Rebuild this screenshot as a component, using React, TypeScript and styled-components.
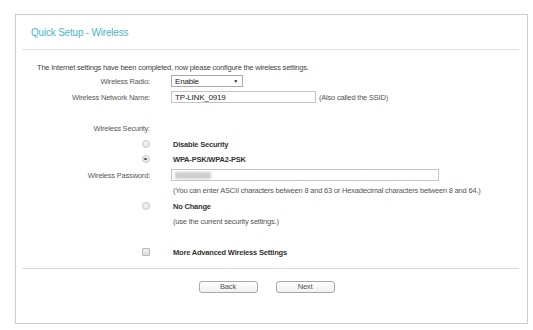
import React from 'react';
import styled, { createGlobalStyle } from 'styled-components';

const Global = createGlobalStyle`
  html, body { margin: 0; padding: 0; background: #ffffff; }
  body {
    font-family: "Liberation Sans", Arial, Helvetica, sans-serif;
    font-size: 7.5px;
    letter-spacing: -0.2px;
    color: #555;
  }
  * { box-sizing: border-box; }
`;

const Page = styled.div`
  padding: 14px 0 0 15px;
`;

const Panel = styled.div`
  width: 513px;
  height: 310px;
  border: 1px solid #cdcdcd;
  box-shadow: 0 0 1px rgba(0, 0, 0, 0.08);
  padding: 0 8px 0 6px;
  display: flex;
  flex-direction: column;
  background: #fff;
`;

const Header = styled.div`
  height: 35px;
  display: flex;
  align-items: center;
  padding-left: 9px;
  border-bottom: 1px solid #e0e0e0;
  color: #4cb6c4;
  font-size: 10px;
  letter-spacing: -0.2px;
`;

const Body = styled.div`
  padding-top: 10px;
  display: flex;
  flex-direction: column;
`;

const Intro = styled.div`
  height: 14px;
  display: flex;
  align-items: center;
  padding-left: 15px;
  color: #444;
`;

const Row = styled.div<{ $mt?: number }>`
  display: grid;
  grid-template-columns: 128px 1fr;
  column-gap: 21px;
  height: 14px;
  align-items: center;
  margin-top: ${(p) => p.$mt ?? 0}px;
`;

const Label = styled.div`
  text-align: right;
  color: #5a5a5a;
  white-space: nowrap;
`;

const MarkCell = styled.div`
  display: flex;
  justify-content: flex-end;
  padding-right: 0.5px;
`;

const Control = styled.div`
  display: flex;
  align-items: center;
  white-space: nowrap;
`;

const Strong = styled.span`
  font-weight: bold;
  color: #333;
  padding-left: 2px;
`;

const Note = styled.span<{ $pl?: number }>`
  color: #555;
  padding-left: ${(p) => p.$pl ?? 2}px;
`;

const Select = styled.div`
  width: 72px;
  height: 12px;
  border: 1px solid #aaa;
  background: #fff;
  display: flex;
  align-items: center;
  justify-content: space-between;
  padding: 0 4px 0 3px;
  color: #222;
  font-size: 8px;
`;

const Arrow = styled.span`
  font-size: 5px;
  color: #222;
`;

const TextBox = styled.div<{ $w: number }>`
  width: ${(p) => p.$w}px;
  height: 12px;
  border: 1px solid #c4c4c4;
  background: #fff;
  display: flex;
  align-items: center;
  padding-left: 3px;
  color: #222;
  font-size: 8px;
`;

const Blur = styled.span`
  display: block;
  width: 36px;
  height: 7px;
  background: #cfcfcf;
  filter: blur(1.2px);
`;

const Radio = styled.span<{ $on?: boolean }>`
  width: 8px;
  height: 8px;
  border-radius: 50%;
  border: 1px solid #c8c8c8;
  background: radial-gradient(circle at 50% 40%, #f6f6f6, #dedede);
  display: flex;
  align-items: center;
  justify-content: center;
  &::after {
    content: '';
    display: ${(p) => (p.$on ? 'block' : 'none')};
    width: 2.5px;
    height: 2.5px;
    border-radius: 50%;
    background: #555;
  }
`;

const Check = styled.span`
  width: 8px;
  height: 8px;
  border-radius: 1px;
  border: 1px solid #b8b8b8;
  background: linear-gradient(#f2f2f2, #dedede);
`;

const Footer = styled.div`
  margin-top: 9px;
  border-top: 1px solid #dcdcdc;
  padding: 12px 8px 0 0;
  display: flex;
  justify-content: center;
  gap: 18px;
`;

const Button = styled.button`
  width: 59px;
  height: 12px;
  border: 1px solid #a8a8a8;
  border-radius: 3px;
  background: linear-gradient(#ffffff, #f1f1f1);
  font-family: inherit;
  font-size: 7.5px;
  letter-spacing: -0.2px;
  color: #555;
  padding: 0;
  line-height: 10px;
`;

export default function App() {
  return (
    <>
      <Global />
      <Page>
        <Panel>
          <Header>Quick Setup - Wireless</Header>
          <Body>
            <Intro>The Internet settings have been completed, now please configure the wireless settings.</Intro>
            <Row>
              <Label>Wireless Radio:</Label>
              <Control>
                <Select>
                  <span>Enable</span>
                  <Arrow>▼</Arrow>
                </Select>
              </Control>
            </Row>
            <Row $mt={2}>
              <Label>Wireless Network Name:</Label>
              <Control>
                <TextBox $w={145}>TP-LINK_0919</TextBox>
                <Note $pl={3}>(Also called the SSID)</Note>
              </Control>
            </Row>
            <Row $mt={17}>
              <Label>Wireless Security:</Label>
              <Control />
            </Row>
            <Row $mt={2}>
              <MarkCell><Radio /></MarkCell>
              <Control><Strong>Disable Security</Strong></Control>
            </Row>
            <Row $mt={1}>
              <MarkCell><Radio $on /></MarkCell>
              <Control><Strong>WPA-PSK/WPA2-PSK</Strong></Control>
            </Row>
            <Row $mt={2}>
              <Label>Wireless Password:</Label>
              <Control>
                <TextBox $w={268}><Blur /></TextBox>
              </Control>
            </Row>
            <Row $mt={1}>
              <div />
              <Control>
                <Note>(You can enter ASCII characters between 8 and 63 or Hexadecimal characters between 8 and 64.)</Note>
              </Control>
            </Row>
            <Row $mt={2}>
              <MarkCell><Radio /></MarkCell>
              <Control><Strong>No Change</Strong></Control>
            </Row>
            <Row $mt={1}>
              <div />
              <Control><Note>(use the current security settings.)</Note></Control>
            </Row>
            <Row $mt={17}>
              <MarkCell><Check /></MarkCell>
              <Control><Strong>More Advanced Wireless Settings</Strong></Control>
            </Row>
          </Body>
          <Footer>
            <Button>Back</Button>
            <Button>Next</Button>
          </Footer>
        </Panel>
      </Page>
    </>
  );
}
